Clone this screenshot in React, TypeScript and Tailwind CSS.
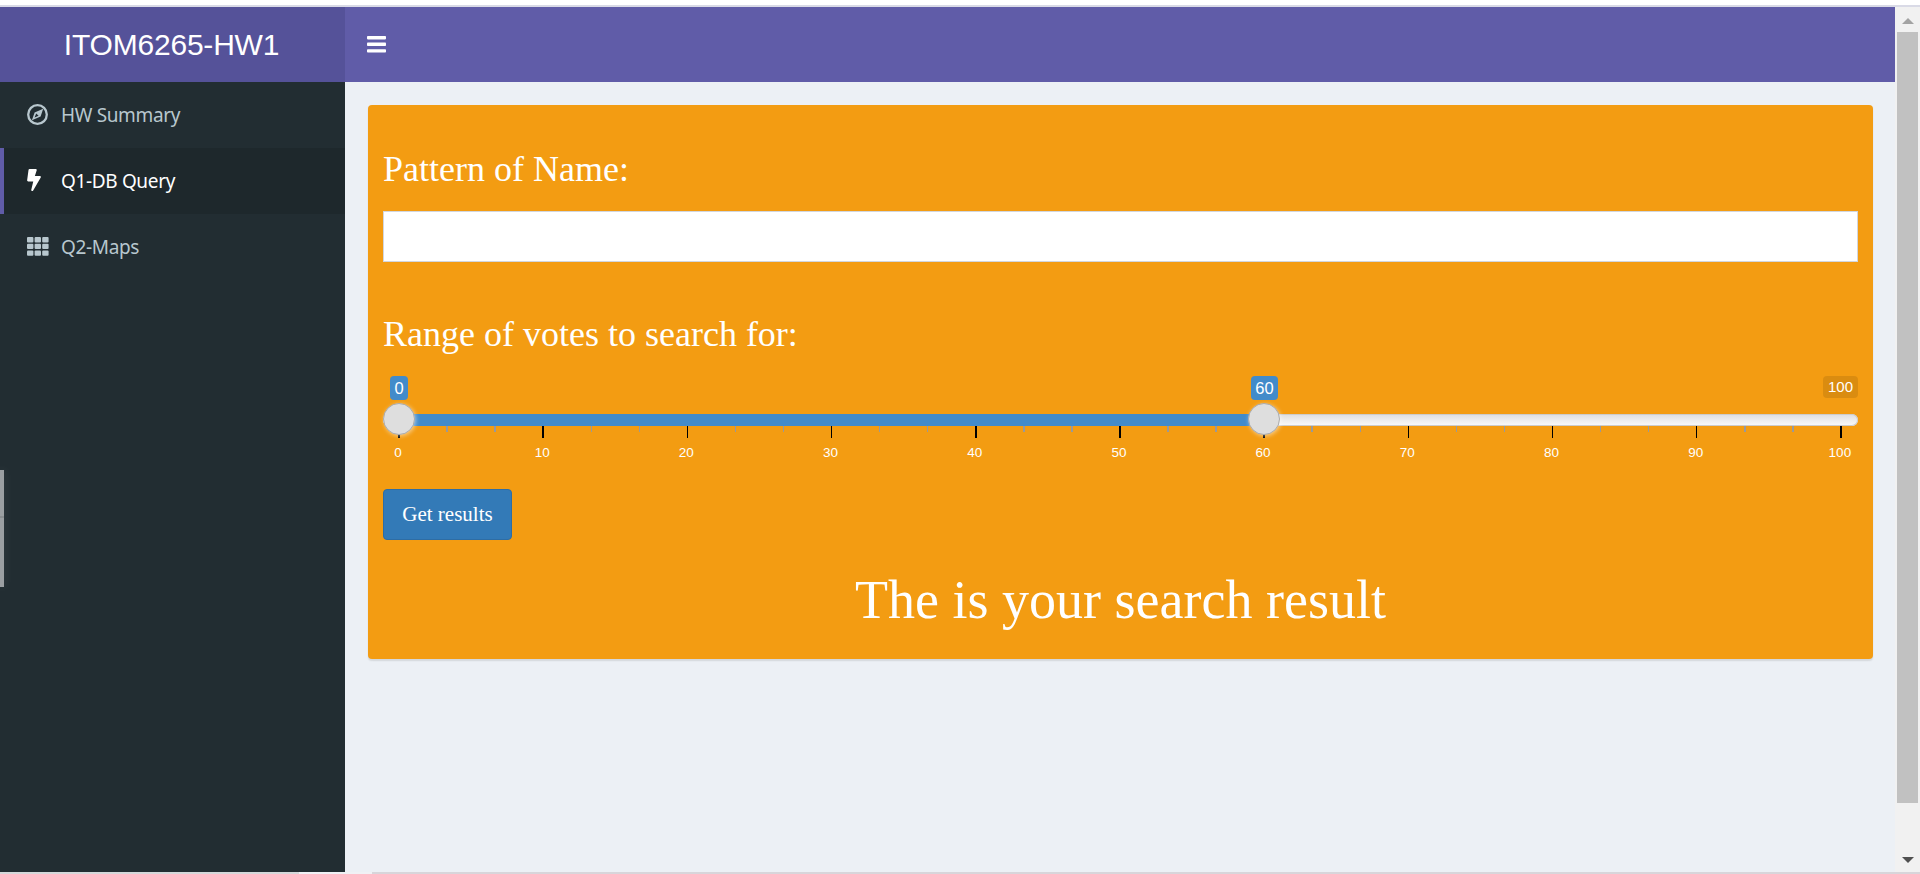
import { useState } from "react";
import type { ReactNode } from "react";
import { FaBolt } from "react-icons/fa";

type MenuItem = { label: string; icon: ReactNode };

function CompassIcon() {
  return (
    <svg className="size-[21px]" viewBox="0 0 21 21" fill="none">
      <circle cx="10.5" cy="10.5" r="9.3" stroke="currentColor" strokeWidth="2.3" />
      <path
        fill="currentColor"
        fillRule="evenodd"
        d="M16.2 4.8L13.6 12.4L4.9 16.2L7.6 8.4ZM9.2 9.6L7.6 13.6L11.6 11.8Z"
      />
    </svg>
  );
}

function GridIcon() {
  return (
    <svg className="h-[19px] w-[22px]" viewBox="0 0 22 19" fill="currentColor">
      {[0, 6.7, 13.4].map((y) =>
        [0, 7.6, 15.2].map((x) => (
          <rect key={`${x}-${y}`} x={x} y={y} width="6.4" height="5.4" rx="1" />
        )),
      )}
    </svg>
  );
}

function BarsIcon() {
  return (
    <svg className="h-[17px] w-[19px]" viewBox="0 0 19 17" fill="currentColor">
      <rect y="0" width="19" height="3.4" rx="0.8" />
      <rect y="6.6" width="19" height="3.4" rx="0.8" />
      <rect y="13.2" width="19" height="3.4" rx="0.8" />
    </svg>
  );
}

const menu: MenuItem[] = [
  { label: "HW Summary", icon: <CompassIcon /> },
  { label: "Q1-DB Query", icon: <FaBolt className="h-[22px] w-[14px]" /> },
  { label: "Q2-Maps", icon: <GridIcon /> },
];

const majorTicks = Array.from({ length: 11 }, (_, i) => i * 10);
const ticks = Array.from({ length: 31 }, (_, i) => i);

function Sidebar() {
  const [active, setActive] = useState("Q1-DB Query");
  return (
    <aside className="relative w-[345px] shrink-0 bg-[#222d32] font-['Noto_Sans',sans-serif]">
      <nav className="flex flex-col">
        {menu.map(({ label, icon }) => (
          <button
            key={label}
            onClick={() => setActive(label)}
            className={
              "flex h-[66px] items-center border-l-4 pl-[23px] text-left text-[19px] tracking-[-0.35px] " +
              (label === active
                ? "border-[#605ca8] bg-[#1e282c] text-white"
                : "border-transparent text-[#b8c7ce]")
            }
          >
            <span className="-mt-0.5 flex w-[34px] items-center">{icon}</span>
            <span className="pt-px">{label}</span>
          </button>
        ))}
      </nav>
      <div className="absolute top-[388px] left-0 h-[117px] w-1 bg-[#9b9fa2] shadow-[0_0_10px_rgba(255,255,255,0.12)]">
        <div className="h-[46px]" />
        <div className="h-0.5 bg-[#8b8f92]" />
      </div>
    </aside>
  );
}

function Handle({ className }: { className: string }) {
  return (
    <div
      className={
        "absolute top-[27px] size-8 rounded-full border border-[#ababab] bg-[#dedede] shadow-[1px_1px_4px_rgba(255,255,255,0.5)] " +
        className
      }
    />
  );
}

function RangeSlider() {
  return (
    <div className="relative mt-[22px] h-[89px] pt-[38px] font-['Liberation_Sans',sans-serif] text-white">
      <div className="h-3 overflow-hidden rounded-full bg-linear-to-b from-[#dedede] to-[#fafafa] shadow-[inset_0_0_0_1px_#cccccc]">
        <div className="ml-4 h-3 w-[865px] bg-[#428bca]" />
      </div>
      <div className="mr-[17px] ml-4 flex h-3 items-start justify-between">
        {ticks.map((i) => (
          <div key={i} className="flex w-0 justify-center">
            <div
              className={
                i % 3 === 0
                  ? "h-3 w-[1.5px] shrink-0 bg-black"
                  : "h-1.5 w-[1.5px] shrink-0 bg-[#999999]"
              }
            />
          </div>
        ))}
      </div>
      <div className="mt-[7px] mr-[18px] ml-[15px] flex justify-between text-[13.5px] leading-4">
        {majorTicks.map((n) => (
          <div key={n} className="flex w-0 justify-center">
            <span>{n}</span>
          </div>
        ))}
      </div>
      <Handle className="left-0" />
      <Handle className="left-[865px]" />
      <span className="absolute top-0 left-[7px] flex h-6 w-[18px] items-center justify-center rounded bg-[#428bca] text-[16.5px]">
        0
      </span>
      <span className="absolute top-0 left-[868px] flex h-6 w-[27px] items-center justify-center rounded bg-[#428bca] text-[16.5px]">
        60
      </span>
      <span className="absolute top-0 right-0 flex h-[22px] w-[35px] items-center justify-center rounded bg-black/10 text-[15px]">
        100
      </span>
    </div>
  );
}

function ScrollBar() {
  return (
    <div className="flex w-[25px] shrink-0 flex-col items-center bg-[#f1f1f1]">
      <div className="flex h-[25px] items-center pt-0.5">
        <svg width="12" height="6" viewBox="0 0 12 6">
          <path d="M0 6L6 0L12 6Z" fill="#a3a3a3" />
        </svg>
      </div>
      <div className="h-[771px] w-[21px] bg-[#c1c1c1]" />
      <svg className="mt-[54px]" width="12" height="6" viewBox="0 0 12 6">
        <path d="M0 0L6 6L12 0Z" fill="#505050" />
      </svg>
    </div>
  );
}

export default function App() {
  return (
    <div className="flex h-[874px] w-[1920px] flex-col overflow-hidden bg-white">
      <div className="mt-[5px] h-0.5 shrink-0 bg-[#d9dae6]" />
      <div className="flex min-h-0 flex-1">
        <div className="flex flex-1 flex-col">
          <header className="flex h-[75px] shrink-0 text-white">
            <div className="flex w-[345px] items-center justify-center bg-[#555299] pr-0.5 pb-px font-['Liberation_Sans',sans-serif] text-[30px] tracking-[-0.2px]">
              ITOM6265-HW1
            </div>
            <div className="flex flex-1 items-center bg-[#605ca8] pl-[22px]">
              <BarsIcon />
            </div>
          </header>
          <div className="flex min-h-0 flex-1">
            <Sidebar />
            <main className="flex-1 bg-[#ecf0f5] pt-[23px] pr-[22px] pl-[23px]">
              <section className="h-[554px] rounded bg-[#f39c12] px-[15px] pt-[44px] font-['Liberation_Serif',serif] text-white shadow-[0_1.5px_1.5px_rgba(0,0,0,0.1)]">
                <h3 className="text-[36px] leading-10">Pattern of Name:</h3>
                <input className="mt-[22px] block h-[51px] w-full border border-[#d2d6de] bg-white px-4 text-[21px] text-[#555555] outline-none" />
                <h3 className="mt-[52px] text-[36px] leading-10">Range of votes to search for:</h3>
                <RangeSlider />
                <button className="mt-6 flex h-[51px] w-[129px] items-center justify-center rounded border border-[#2e6da4] bg-[#337ab7] text-[21px]">
                  Get results
                </button>
                <h1 className="mt-[30px] text-center text-[54px] leading-[60px]">
                  The is your search result
                </h1>
              </section>
            </main>
          </div>
        </div>
        <ScrollBar />
      </div>
      <div className="flex h-0.5 shrink-0 bg-[#d8d5da]">
        <div className="w-[299px] bg-[#d5d8da]" />
        <div className="w-[73px] bg-[#f0f1f5]" />
      </div>
    </div>
  );
}
